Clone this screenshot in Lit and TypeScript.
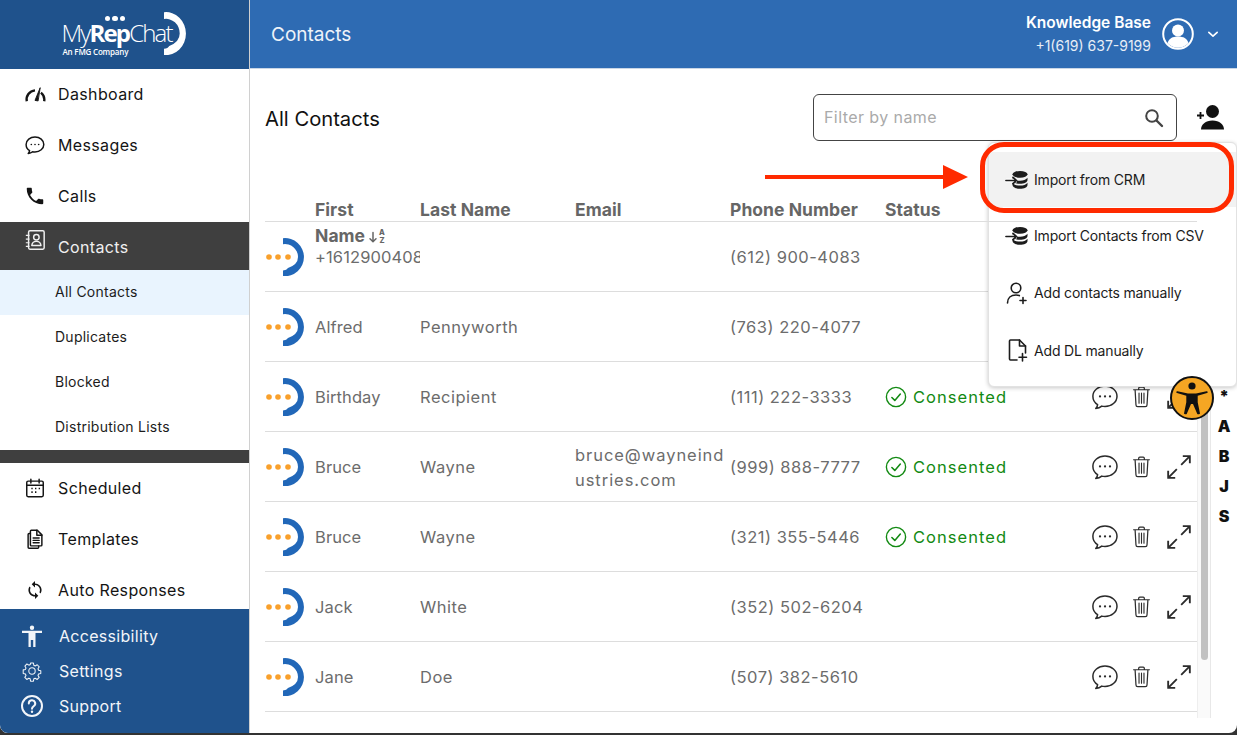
import { LitElement, html, css, svg } from "lit";
import { customElement } from "lit/decorators.js";

const ico = (size: number, body: unknown, cls = "") =>
  html`<svg class="ico ${cls}" width=${size} height=${size} viewBox="0 0 24 24" fill="none" stroke="currentColor" stroke-width="1.6" stroke-linecap="round" stroke-linejoin="round">${body}</svg>`;

const bubble = svg`<path d="M12 3.2c5.3 0 9.6 3.6 9.6 8.2s-4.3 8.2-9.6 8.2c-.9 0-1.8-.1-2.6-.3-1.3 1.2-2.9 1.8-4.8 1.9.9-.9 1.4-1.9 1.5-3.1-2.5-1.5-3.8-3.9-3.8-6.7 0-4.6 4.4-8.2 9.7-8.2z"/><circle cx="8" cy="11.5" r=".9" fill="currentColor" stroke="none"/><circle cx="12" cy="11.5" r=".9" fill="currentColor" stroke="none"/><circle cx="16" cy="11.5" r=".9" fill="currentColor" stroke="none"/>`;
const bubbleThin = svg`<g stroke-width="1.2">${bubble}</g>`;
const trash = svg`<path stroke-width="1.1" d="M5 6h14M9.5 6V4.6c0-.6.4-1 1-1h3c.6 0 1 .4 1 1V6M6.3 6l.8 13.5c0 1 .7 1.5 1.5 1.5h6.800c.8 0 1.500-.5 1.500-1.500L17.700 6"/><path d="M9.800 9v9M12 9v9M14.200 9v9" stroke-width="1"/>`;
const expand = svg`<path d="M14 10l8-8M15.500 2H22v6.500M10 14l-8 8M8.500 22H2v-6.500" stroke-width="1.700" stroke-linecap="butt" stroke-linejoin="miter"/>`;
const dbImport = svg`<g transform="translate(0 1.5) scale(1 .88)"><ellipse cx="15" cy="5.500" rx="7.500" ry="3.800" fill="currentColor" stroke="none"/><path fill="currentColor" stroke="none" d="M7.500 9.500c1.500 2.300 4.200 3.300 7.500 3.300s6-1 7.500-3.300v2.500c0 2.500-3.300 4.300-7.500 4.300s-7.500-1.800-7.500-4.300z"/><path fill="currentColor" stroke="none" d="M7.500 15c1.500 2.300 4.200 3.300 7.500 3.300s6-1 7.500-3.300v2.500c0 2.500-3.300 4.300-7.500 4.300s-7.500-1.800-7.500-4.300z"/><path d="M1 12.500h11" stroke="#fff" stroke-width="4.500" stroke-linecap="butt"/><path d="M1 12.500h10M8 9l3.500 3.500L8 16" stroke-width="1.800"/></g>`;

const nav1 = [
  ["Dashboard", svg`<path d="M3 20a10 10 0 0 1 9-12" stroke-width="2.600" stroke-linecap="butt"/><path d="M18.500 10.500a10 10 0 0 1 3.500 9.500" stroke-width="2.600" stroke-linecap="butt"/><path d="M17.500 5.500l-5.500 13.500 3 .5z" fill="currentColor" stroke-width="1"/>`],
  ["Messages", bubble],
  ["Calls", svg`<path stroke="none" fill="currentColor" d="M6.620 10.790c1.440 2.830 3.760 5.140 6.590 6.590l2.200-2.200c.27-.27.67-.36 1.020-.24 1.120.37 2.330.57 3.570.57.55 0 1 .45 1 1V20c0 .55-.45 1-1 1-9.390 0-17-7.610-17-17 0-.55.45-1 1-1h3.500c.55 0 1 .45 1 1 0 1.250.2 2.450.57 3.570.11.35.03.74-.25 1.020l-2.200 2.200z"/>`],
];
const nav2 = [
  ["Scheduled", svg`<rect x="3" y="4.500" width="18" height="17" rx="1.500"/><path d="M3 9h18M7.500 2.500v4M16.500 2.500v4"/><path d="M8 12.500h1.500M12 12.500h1.500M16 12.500h1.500M8 16.500h1.500M12 16.500h1.500" stroke-width="1.700" stroke-linecap="butt"/>`],
  ["Templates", svg`<path d="M8 2.500h6.500l5 5V18.500a1 1 0 0 1-1 1H8a1 1 0 0 1-1-1v-15a1 1 0 0 1 1-1z"/><path d="M14 2.500V8h5.500"/><path d="M7 6H5.500a1 1 0 0 0-1 1v14a1 1 0 0 0 1 1H15a1 1 0 0 0 1-1v-1.500"/><path d="M10 11h6.500M10 13.500h6.500M10 16h6.500"/>`],
  ["Auto Responses", svg`<g transform="translate(1.200 1.200) scale(.9)"><path stroke="none" fill="currentColor" d="M12 4V1L8 5l4 4V6c3.310 0 6 2.690 6 6 0 1.010-.25 1.970-.7 2.800l1.460 1.460C19.540 15.030 20 13.570 20 12c0-4.420-3.580-8-8-8zm0 14c-3.310 0-6-2.690-6-6 0-1.010.25-1.970.7-2.800L5.240 7.740C4.460 8.970 4 10.430 4 12c0 4.420 3.580 8 8 8v3l4-4-4-4v3z"/></g>`],
];
const subs = ["All Contacts", "Duplicates", "Blocked", "Distribution Lists"];
const foot = [
  ["Accessibility", svg`<path stroke="none" fill="currentColor" d="M12 1.500a2.200 2.200 0 1 1 0 4.400 2.200 2.200 0 0 1 0-4.400zM22 9h-6.500v14h-2.300v-7h-2.400v7H8.500V9H2V6.800h20z"/>`],
  ["Settings", svg`<g transform="translate(2.400 2.400) scale(.8)"><circle cx="12" cy="12" r="4" stroke-width="1.300"/><path stroke-width="1.300" d="M10.200 2h3.600l.5 2.900 1.700.8 2.500-1.500 2.500 2.600-1.500 2.400.7 1.800 2.800.6v3.600l-2.800.6-.7 1.800 1.500 2.400-2.500 2.600-2.500-1.500-1.700.7-.5 2.900h-3.600l-.5-2.900-1.700-.7-2.500 1.500-2.500-2.600 1.500-2.400-.7-1.800-2.800-.6V10.600l2.800-.6.7-1.800L3.100 5.800l2.500-2.600 2.500 1.500 1.700-.8z"/></g>`],
  ["Support", svg`<circle cx="12" cy="12" r="10" stroke-width="2"/><path d="M8.800 9.500a3.200 3.200 0 1 1 4.700 2.800c-1 .6-1.500 1.200-1.500 2.400" stroke-width="2"/><circle cx="12" cy="17.800" r="1.200" fill="currentColor" stroke="none"/>`],
];
const rows = [
  ["+1612900408", "", "", "(612) 900-4083", false],
  ["Alfred", "Pennyworth", "", "(763) 220-4077", false],
  ["Birthday", "Recipient", "", "(111) 222-3333", true],
  ["Bruce", "Wayne", "bruce@wayneindustries.com", "(999) 888-7777", true],
  ["Bruce", "Wayne", "", "(321) 355-5446", true],
  ["Jack", "White", "", "(352) 502-6204", false],
  ["Jane", "Doe", "", "(507) 382-5610", false],
] as [string, string, string, string, boolean][];
const menu = [
  ["Import from CRM", dbImport, true],
  ["Import Contacts from CSV", dbImport, false],
  ["Add contacts manually", svg`<circle cx="11" cy="7" r="4.800"/><path d="M2.500 22c0-5 3.500-8 8.500-8 1.200 0 2.300.2 3.300.6"/><path d="M18 16.500v6M15 19.500h6"/>`, false],
  ["Add DL manually", svg`<path d="M12 22H5.500a1 1 0 0 1-1-1V3a1 1 0 0 1 1-1h9l6 6v7"/><path d="M14.500 2v6h6"/><path d="M17.500 15.500v7.500M14 19.300h7.500"/>`, false],
] as [string, unknown, boolean][];

const mark = svg`<path d="M18 1.200A19 19 0 1 1 18 39v-5.500q3.800-.3 5-2.500 10-3.500 10-11A13 13 0 0 0 18 7.200z"/>`;

@customElement("app-root")
export class AppRoot extends LitElement {
  static styles = css`
    :host { display: block; font-family: Inter, "Liberation Sans", sans-serif; }
    * { box-sizing: border-box; }
    .ico { display: block; flex: none; }
    .page { height: 735px; background: #333; position: relative; overflow: hidden; }
    .frame { height: 733px; display: flex; background: #fff; border-radius: 0 0 8px 8px; overflow: hidden; }

    .side { width: 250px; flex: none; display: flex; flex-direction: column; border-right: 1px solid #d0d0d0; background: #fff; }
    .logo { height: 69px; flex: none; background: #1f528c; display: flex; justify-content: center; align-items: flex-start; color: #fff; }
    .logo-inner { position: relative; width: 126px; height: 69px; }
    .logo-word { position: absolute; left: 0; top: 20px; font: 300 24px/26px "Open Sans", sans-serif; letter-spacing: -1.85px; white-space: nowrap; }
    .logo-word b { font-weight: 700; }
    .logo-sub { position: absolute; left: 1px; top: 47px; font: 600 8px/10px "Open Sans", sans-serif; white-space: nowrap; letter-spacing: -.2px; }
    .logo-dots { position: absolute; left: 43px; top: 15.5px; display: flex; gap: 2.2px; }
    .logo-dots i { width: 5.5px; height: 5.5px; border-radius: 50%; background: #fff; }
    .logo-mark { position: absolute; left: 102.5px; top: 12px; display: block; }
    .nav { flex: 1; overflow: hidden; min-height: 0; }
    .item { height: 51px; padding-bottom: 2px; display: flex; align-items: center; color: #141414; font-size: 16px; letter-spacing: .36px; }
    .item .slot { width: 58px; padding-left: 24px; flex: none; }
    .active { height: 48px; padding: 2px 0 0; background: #3f3f3f; color: #f0f0f0; }
    .active .ico { transform: translateY(-7px); }
    .sub { height: 45px; padding: 0 0 2px 55px; display: flex; align-items: center; font-size: 14px; letter-spacing: .25px; color: #1c1c1c; }
    .sub.on { background: #e9f4fe; }
    .bar { height: 13px; background: #3f3f3f; }
    .foot { height: 124px; flex: none; background: #1f528c; padding-top: 9.5px; color: #f2f5f9; }
    .foot .f { height: 35px; display: flex; align-items: center; font-size: 16px; letter-spacing: .3px; }
    .foot .slot { width: 59px; padding-left: 20px; flex: none; }

    .main { flex: 1; min-width: 0; display: flex; flex-direction: column; }
    .top { height: 69px; flex: none; background: #2e6bb3; border-bottom: 1px solid #c9d6e6; color: #fff; display: flex; align-items: center; padding: 0 14px 0 21px; }
    .top h1 { margin: 0; font-size: 19px; font-weight: 400; color: #eef3f9; flex: 1; }
    .who { text-align: right; margin-right: 11px; }
    .who b { display: block; font-size: 15.5px; font-weight: 600; line-height: 23px; }
    .who span { display: block; font-size: 14px; line-height: 23px; color: #e8eef6; }
    .chev { margin-left: 9px; }

    .bar2 { flex: none; height: 47px; margin-top: 25px; padding: 0 13px 0 15px; display: flex; align-items: center; }
    .bar2 h2 { margin: 0; padding-top: 1px; font-size: 20.2px; font-weight: 400; color: #111; flex: 1; }
    .search { width: 364px; height: 47px; border: 1px solid #444; border-radius: 6px; display: flex; align-items: center; justify-content: space-between; padding: 0 10px; margin-right: 20px; color: #444; }
    .search span { font-size: 16px; letter-spacing: .42px; color: #aaa; padding-bottom: 1px; }

    .body { flex: 1; min-height: 0; margin: 55px 0 15px 15px; display: flex; }
    .table { width: 932px; flex: none; overflow: hidden; padding-top: 3px; }
    .grid { display: grid; grid-template-columns: 50px 105px 155px 155px 155px 205px 107px; align-items: center; }
    .head { height: 23px; align-items: start; border-bottom: 1px solid #ddd; font-weight: 700; font-size: 17.5px; letter-spacing: .05px; line-height: 26px; color: #666; position: relative; z-index: 1; }
    .head > div { margin-top: -2px; }
    .sort { display: inline-flex; align-items: center; vertical-align: -1px; margin-left: 2px; }
    .sort em { font-style: normal; font-size: 7.5px; line-height: 8px; font-weight: 800; display: block; text-align: center; }
    .row { height: 70px; border-bottom: 1px solid #ddd; color: #6c6c6c; font-size: 16.5px; letter-spacing: .5px; line-height: 26px; }
    .mk { display: block; }
    .clip { overflow: hidden; white-space: nowrap; letter-spacing: .1px; }
    .email { width: 150px; padding-top: 2px; line-height: 25px; overflow-wrap: anywhere; letter-spacing: .95px; }
    .status { display: flex; align-items: center; gap: 6px; color: #128a12; letter-spacing: 1.05px; }
    .acts { display: flex; align-items: center; color: #2b2b2b; }
    .acts .t { margin: 0 10.6px 0 8.4px; }
    .track { width: 14px; flex: none; background: #fafafa; border-left: 1px solid #eee; border-right: 1px solid #e8e8e8; padding: 22px 2px 0 3px; }
    .thumb { height: 442px; background: #c1c1c1; border-radius: 4px; }
    .letters { flex: 1; padding-top: 185px; text-align: center; font-weight: 900; font-size: 16px; line-height: 30px; color: #111; }

    .menu { position: absolute; left: 988px; top: 142px; width: 249px; height: 245px; background: #fff; border: 1px solid #e2e2e2; border-radius: 6px; box-shadow: 0 1px 4px rgba(0,0,0,.22); padding-top: 9px; color: #1c1c1c; }
    .mi { height: 57.3px; display: flex; align-items: center; padding-left: 16px; gap: 5px; font-size: 14px; letter-spacing: -.17px; }
    .mi.on { background: #f2f2f2; height: 55px; }
    .ring { position: absolute; left: 980px; top: 142px; width: 254px; height: 71px; border: 5px solid #ff2a00; border-radius: 24px; pointer-events: none; }
    .arrow { position: absolute; left: 765px; top: 165px; }
    .badge { position: absolute; left: 1170px; top: 376px; width: 44px; height: 44px; border-radius: 50%; background: #f5a623; border: 2px solid #111; display: flex; align-items: center; justify-content: center; color: #111; }
  `;

  render() {
    return html`<div class="page">
      <div class="frame">
        <aside class="side">
          <div class="logo"><div class="logo-inner">
            <div class="logo-dots"><i></i><i></i><i></i></div>
            <div class="logo-word">My<b>Rep</b>Chat</div>
            <div class="logo-sub">An FMG Company</div>
            <svg class="logo-mark" width="22" height="43" viewBox="18 1 21 38" fill="#fff" preserveAspectRatio="none">${mark}</svg>
          </div></div>
          <nav class="nav">
            ${nav1.map(([t, i]) => html`<div class="item"><span class="slot">${ico(22, i)}</span>${t}</div>`)}
            <div class="item active"><span class="slot">${ico(22, svg`<rect x="5" y="2" width="17" height="20" rx="1.5"/><circle cx="13.5" cy="9" r="3"/><path d="M8.500 18c.3-3 2.300-4.500 5-4.500s4.700 1.500 5 4.500z"/><path d="M2 7h4M2 11h4M2 15h4M2 19h4" stroke-width="1.300" stroke-linecap="butt"/>`)}</span>Contacts</div>
            ${subs.map((s, i) => html`<div class="sub ${i === 0 ? "on" : ""}">${s}</div>`)}
            <div class="bar"></div>
            ${nav2.map(([t, i]) => html`<div class="item"><span class="slot">${ico(22, i)}</span>${t}</div>`)}
          </nav>
          <div class="foot">
            ${foot.map(([t, i]) => html`<div class="f"><span class="slot">${ico(24, i)}</span>${t}</div>`)}
          </div>
        </aside>
        <main class="main">
          <header class="top">
            <h1>Contacts</h1>
            <div class="who"><b>Knowledge Base</b><span>+1(619) 637-9199</span></div>
            <svg width="32" height="32" viewBox="0 0 32 32"><circle cx="16" cy="16" r="14.8" fill="none" stroke="#fff" stroke-width="2"/><circle cx="16" cy="12.5" r="6" fill="#fff"/><path d="M5.500 25c1.500-4.500 5-6.500 10.500-6.500s9 2 10.500 6.500a14 14 0 0 1-21 0z" fill="#fff"/></svg>
            <span class="chev">${ico(20, svg`<path d="M7 10l5 4.500 5-4.500" stroke-width="2"/>`)}</span>
          </header>
          <div class="bar2">
            <h2>All Contacts</h2>
            <div class="search"><span>Filter by name</span>${ico(24, svg`<circle cx="10" cy="10" r="5.800" stroke-width="2"/><path d="M14.500 14.500L20 20" stroke-width="2.400"/>`)}</div>
            <svg width="27" height="27" viewBox="0 0 27 27" fill="#111"><circle cx="15.5" cy="7.5" r="6.500"/><path d="M4 25.500c0-5 4.500-9 11.500-9s11.500 4 11.500 9z"/><path d="M0 11.500h7M3.500 8v7" stroke="#111" stroke-width="1.800" fill="none"/></svg>
          </div>
          <div class="body">
            <div class="table">
              <div class="grid head">
                <div></div>
                <div>First<br>Name<span class="sort">${ico(12, svg`<path d="M12 3v18M6 15.500l6 6 6-6" stroke-width="3"/>`)}<span><em>A</em><em>Z</em></span></span></div>
                <div>Last Name</div><div>Email</div><div>Phone Number</div><div>Status</div><div></div>
              </div>
              ${rows.map(([f, l, e, p, c]) => html`<div class="grid row">
                <div><svg class="mk" width="40" height="40" viewBox="0 0 40 40"><g fill="#2167b8">${mark}</g><g fill="#f9a02b"><circle cx="4" cy="20" r="2.800"/><circle cx="13" cy="20" r="2.800"/><circle cx="23" cy="20" r="2.800"/></g></svg></div>
                <div class="clip">${f}</div>
                <div>${l}</div>
                <div><div class="email">${e}</div></div>
                <div>${p}</div>
                <div>${c ? html`<span class="status">${ico(22, svg`<circle cx="12" cy="12" r="10.5" stroke-width="1.500"/><path d="M7.500 12.500l3.200 3.200 6-7" stroke-width="1.700"/>`)}Consented</span>` : ""}</div>
                <div class="acts">${ico(30, bubbleThin)}<span class="t">${ico(27, trash)}</span>${ico(26, expand)}</div>
              </div>`)}
            </div>
            <div class="track"><div class="thumb"></div></div>
            <div class="letters"><div>*</div><div>A</div><div>B</div><div>J</div><div>S</div></div>
          </div>
        </main>
      </div>
      <div class="menu">
        ${menu.map(([t, i, on]) => html`<div class="mi ${on ? "on" : ""}">${ico(24, i)}${t}</div>`)}
      </div>
      <div class="ring"></div>
      <svg class="arrow" width="204" height="24" viewBox="0 0 204 24"><path d="M0 10h178V0l25 12-25 12V14H0z" fill="#ff2a00"/></svg>
      <div class="badge"><svg width="36" height="36" viewBox="0 0 36 36" fill="#111"><circle cx="18" cy="6" r="3.6"/><path d="M3.500 11.200c-.6-.2-1.100.1-1.200.7s.2 1 .7 1.200l9.300 2.600v6.500L10 33.500c-.1.800 2.400 1.200 2.700.4L17 24h2l4.300 9.900c.3.800 2.800.4 2.700-.4L23.700 22.200v-6.500l9.300-2.600c.5-.2.800-.6.700-1.200s-.6-.9-1.200-.7l-10.500 2.300h-8z"/></svg></div>
    </div>`;
  }
}
